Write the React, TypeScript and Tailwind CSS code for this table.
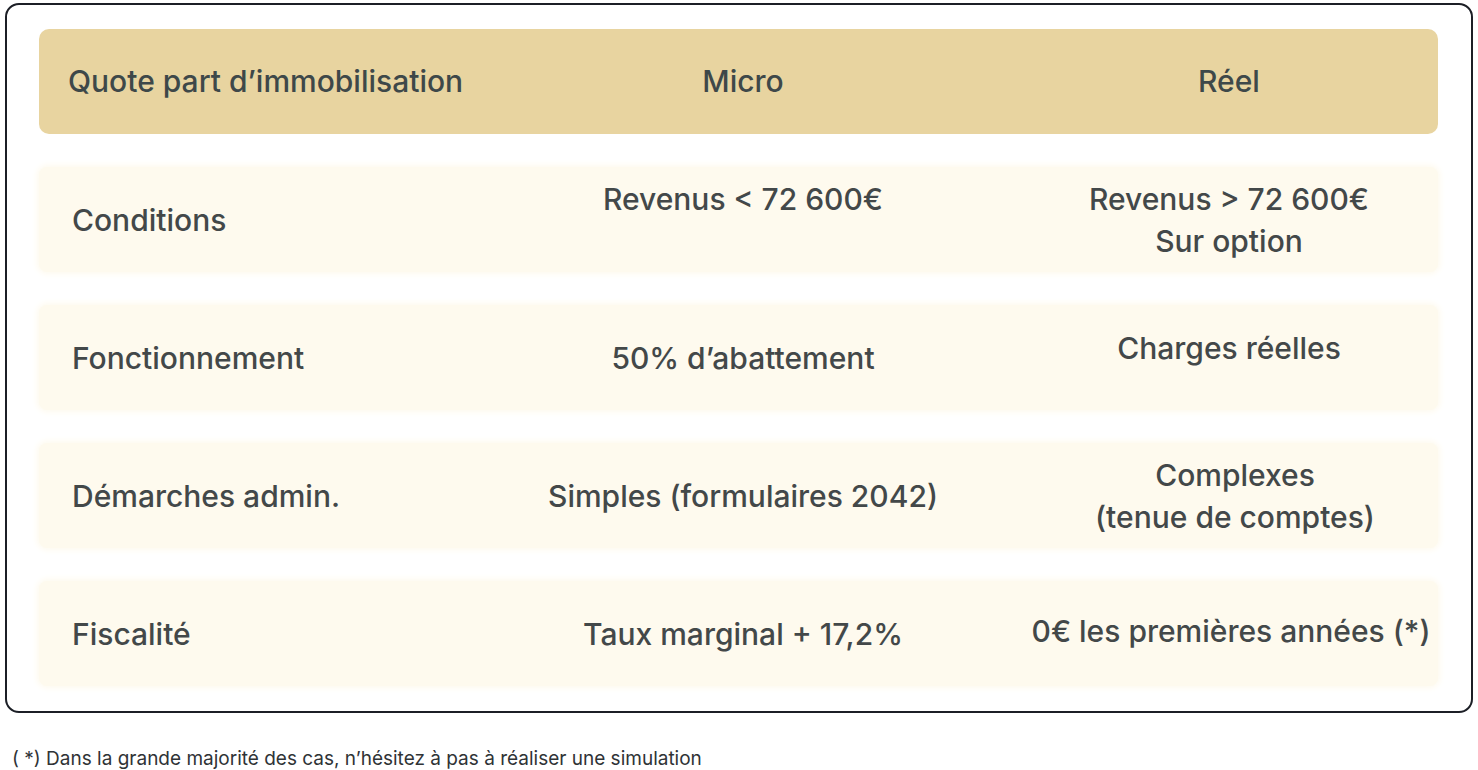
import React from 'react'

const rows = [
  { label: 'Conditions', micro: 'Revenus < 72 600€', microTop: true, reel: ['Revenus > 72 600€', 'Sur option'], reelShift: '' },
  { label: 'Fonctionnement', micro: '50% d’abattement', microTop: false, reel: ['Charges réelles'], reelShift: 'mb-5' },
  { label: 'Démarches admin.', micro: 'Simples (formulaires 2042)', microTop: false, reel: ['Complexes', '(tenue de comptes)'], reelShift: 'ml-3' },
  { label: 'Fiscalité', micro: 'Taux marginal + 17,2%', microTop: false, reel: ['0€ les premières années (*)'], reelShift: 'mb-1.5 ml-1' },
]

export default function App() {
  return (
    <div className="min-h-[770px] w-[1478px] bg-white px-[5px] pt-[3px] font-['Inter','Liberation_Sans',sans-serif] text-[#434849]">
      {/* Table card */}
      <div className="rounded-[14px] border-2 border-[#1c1f26] pt-6 pl-8 pr-[33px] pb-[25px]">
        <div className="flex flex-col gap-[33px]">
          {/* Header */}
          <div className="grid h-[105px] grid-cols-[427px_554px_418px] items-center rounded-[10px] bg-[#e8d4a0] text-[30px] font-medium text-[#3e4849]">
            <div className="pl-[29px]">Quote part d’immobilisation</div>
            <div className="text-center">Micro</div>
            <div className="text-center">Réel</div>
          </div>

          {rows.map((r) => (
            <div
              key={r.label}
              className="grid h-[105px] grid-cols-[427px_554px_418px] items-center rounded-lg bg-[#fefaee] text-[30px] font-medium leading-[42px] shadow-[0_0_6px_2px_#fefaee]"
            >
              <div className="pl-[33px]">{r.label}</div>
              <div className="flex flex-col items-center text-center">
                <span>{r.micro}</span>
                {r.microTop && <span className="invisible">.</span>}
              </div>
              <div className={`flex flex-col items-center text-center whitespace-nowrap ${r.reelShift}`}>
                {r.reel.map((l) => (
                  <span key={l}>{l}</span>
                ))}
              </div>
            </div>
          ))}
        </div>
      </div>

      <p className="mt-[32px] pl-[7px] text-[19px] text-[#2f3336]">
        ( *) Dans la grande majorité des cas, n’hésitez à pas à réaliser une simulation
      </p>
    </div>
  )
}
